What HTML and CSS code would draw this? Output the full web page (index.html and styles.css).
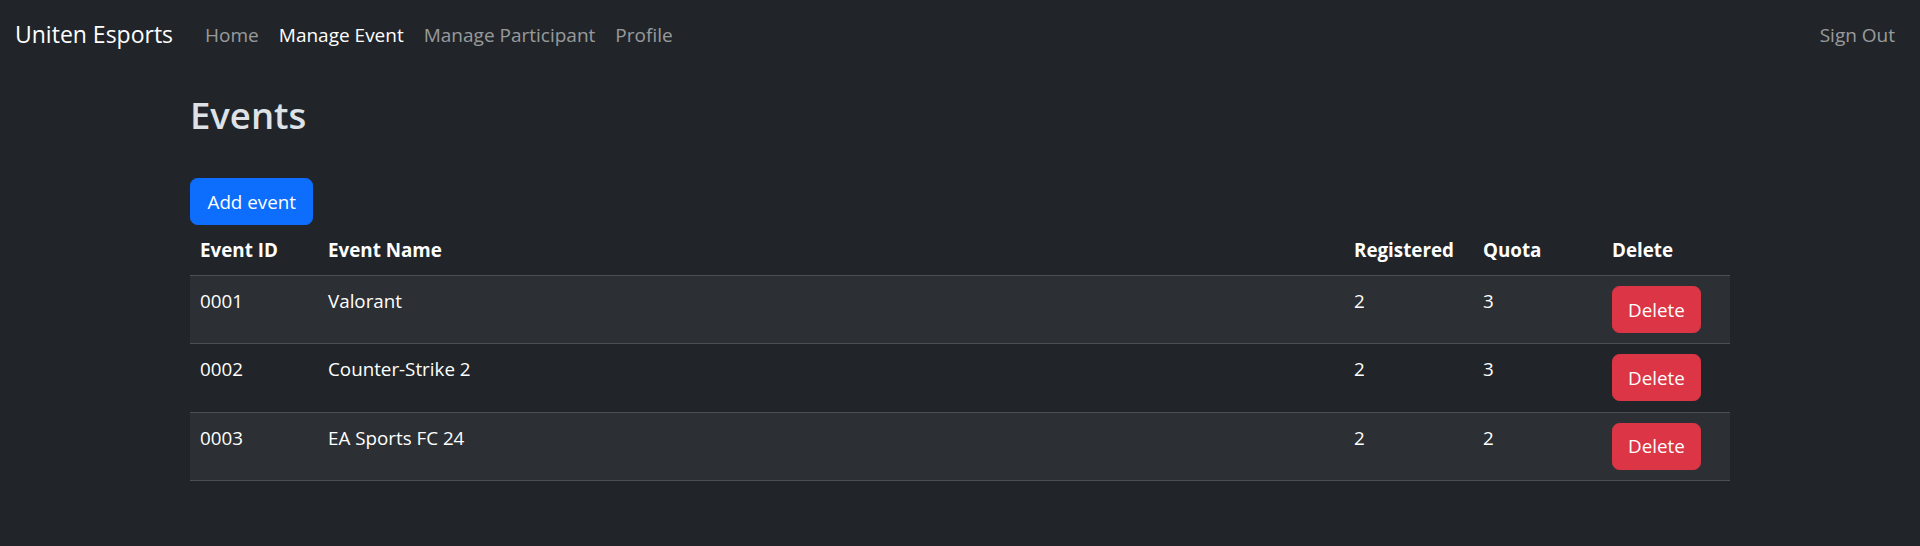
FILE: index.html
```html
<!DOCTYPE html>
<html lang="en">
<head>
<meta charset="utf-8">
<title>Events - Uniten Esports</title>
<link rel="stylesheet" href="styles.css">
</head>
<body>
<nav class="navbar">
  <a class="brand" href="#">Uniten Esports</a>
  <ul class="nav-links">
    <li><a class="nav-link" href="#">Home</a></li>
    <li><a class="nav-link active" href="#">Manage Event</a></li>
    <li><a class="nav-link" href="#">Manage Participant</a></li>
    <li><a class="nav-link" href="#">Profile</a></li>
  </ul>
  <a class="nav-link" href="#">Sign Out</a>
</nav>
<main class="container">
  <h1 class="title">Events</h1>
  <a class="btn btn-primary btn-add" href="#">Add event</a>
  <table class="table">
    <colgroup>
      <col class="col-id">
      <col class="col-name">
      <col class="col-reg">
      <col class="col-quota">
      <col class="col-del">
    </colgroup>
    <thead>
      <tr><th>Event ID</th><th>Event Name</th><th>Registered</th><th>Quota</th><th>Delete</th></tr>
    </thead>
    <tbody>
      <tr class="striped"><td>0001</td><td>Valorant</td><td>2</td><td>3</td><td><button class="btn btn-danger">Delete</button></td></tr>
      <tr><td>0002</td><td>Counter-Strike 2</td><td>2</td><td>3</td><td><button class="btn btn-danger">Delete</button></td></tr>
      <tr class="striped"><td>0003</td><td>EA Sports FC 24</td><td>2</td><td>2</td><td><button class="btn btn-danger">Delete</button></td></tr>
    </tbody>
  </table>
</main>
</body>
</html>
```
FILE: styles.css
```css
* { box-sizing: border-box; }
html, body { margin: 0; padding: 0; }
body {
  background: #212529;
  color: #dee2e6;
  font-family: "Open Sans", "Noto Sans", sans-serif;
  font-size: 18.8px;
  line-height: 30px;
}
a { text-decoration: none; }

.navbar {
  display: flex;
  align-items: center;
  height: 70px;
  padding: 0 15px;
}
.brand {
  color: #fff;
  font-size: 23px;
  line-height: 37.5px;
  margin-right: 22px;
}
.nav-links {
  display: flex;
  list-style: none;
  margin: 0;
  padding: 0;
  flex: 1;
}
.nav-link {
  display: block;
  padding: 0 10px;
  color: rgba(255, 255, 255, 0.55);
  font-size: 19px;
  line-height: 30px;
}
.nav-link.active { color: #fff; }

.container {
  width: 1540px;
  margin: 0 auto;
}
.title {
  margin: 24px 0 0;
  font-size: 36.5px;
  font-weight: 600;
  line-height: 43px;
  color: #dee2e6;
}
.btn {
  display: inline-block;
  vertical-align: top;
  padding: 7.5px 15px;
  font-family: inherit;
  font-size: 18.8px;
  line-height: 30px;
  color: #fff;
  border: 1px solid transparent;
  border-radius: 7.5px;
  cursor: pointer;
}
.btn-add {
  margin-top: 41px;
  padding-left: 16.5px;
  padding-right: 16.5px;
}
.btn-primary { background: #0d6efd; border-color: #0d6efd; }
.btn-danger { background: #dc3545; border-color: #dc3545; }

.table {
  width: 100%;
  table-layout: fixed;
  border-collapse: collapse;
  color: #fff;
}
.col-id { width: 128px; }
.col-name { width: 1026px; }
.col-reg { width: 129px; }
.col-quota { width: 129px; }
.col-del { width: 128px; }
.table th, .table td {
  padding: 10px;
  text-align: left;
  vertical-align: top;
  border-bottom: 1px solid #495057;
  line-height: 30px;
}
.table td { padding-bottom: 10.3px; }
.table th { font-weight: 700; }
.table tr.striped td { background: #2c3034; }
```
